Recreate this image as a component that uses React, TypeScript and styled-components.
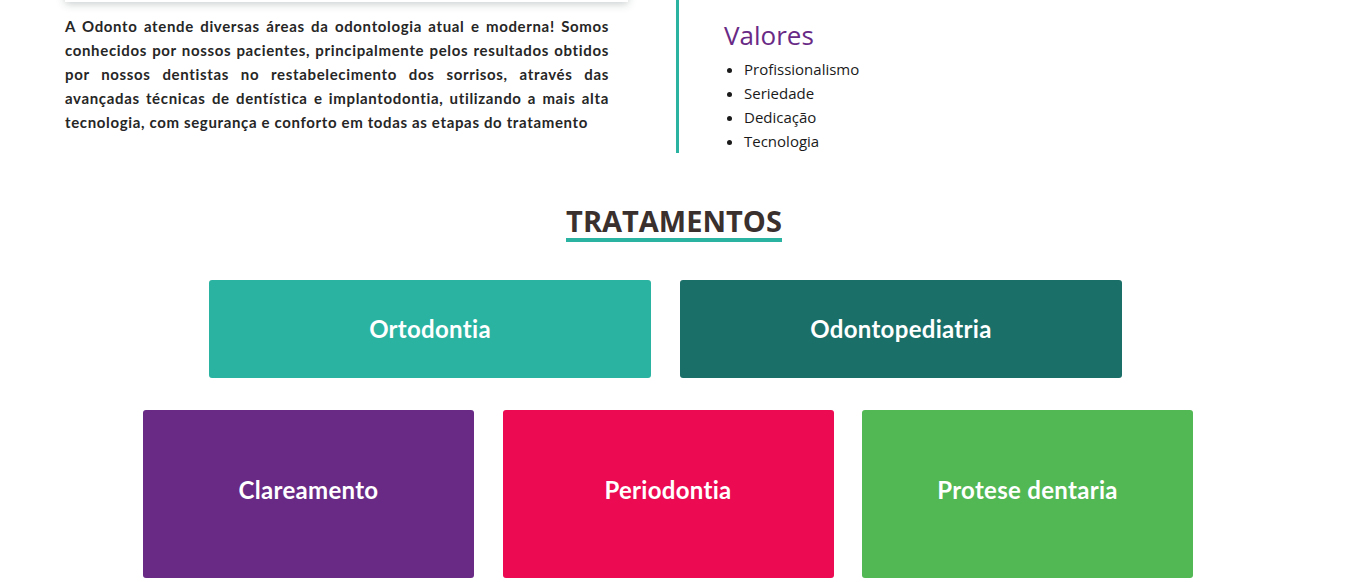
import React from "react";
import styled, { createGlobalStyle } from "styled-components";

const Global = createGlobalStyle`
  html, body { margin: 0; padding: 0; background: #fff; }
  body { font-family: "Lato", "Noto Sans", sans-serif; }
`;

const Page = styled.div`
  width: 1348px;
  overflow: hidden;
`;

const About = styled.section`
  display: flex;
  align-items: flex-start;
  padding-left: 65px;
`;

const LeftCol = styled.div`
  width: 563px;
  display: flex;
  flex-direction: column;
`;

const Picture = styled.div`
  height: 20px;
  margin-top: -18px;
  background: #fff;
  box-shadow: 0 2px 8px rgba(40, 60, 60, 0.25);
`;

const Intro = styled.p`
  margin: 12px 0 0;
  width: 544px;
  font-family: "Lato", sans-serif;
  font-weight: 700;
  font-size: 15px;
  letter-spacing: 0.65px;
  line-height: 24px;
  color: #262626;
  text-align: justify;
`;

const Values = styled.div`
  margin-left: 48px;
  border-left: 3px solid #2bb3a1;
  padding: 17px 0 0 45px;
  height: 136px;
`;

const ValuesTitle = styled.h3`
  margin: 0;
  font-family: "Open Sans", "Noto Sans", sans-serif;
  font-weight: 400;
  font-size: 26px;
  line-height: 36px;
  color: #692a86;
`;

const List = styled.ul`
  margin: 4px 0 0;
  padding-left: 20px;
  font-family: "Open Sans", "Noto Sans", sans-serif;
  font-size: 15px;
  line-height: 24px;
  color: #1a1a1a;
`;

const Heading = styled.h2`
  margin: 51px auto 0;
  width: fit-content;
  font-family: "Open Sans", sans-serif;
  font-weight: 700;
  font-size: 29px;
  line-height: 34px;
  color: #3a302e;
  border-bottom: 4px solid #2bb3a1;
`;

const Row = styled.div<{ $top: number; $left: number; $gap: number }>`
  display: flex;
  gap: ${(p) => p.$gap}px;
  padding-left: ${(p) => p.$left}px;
  margin-top: ${(p) => p.$top}px;
`;

const Card = styled.div<{ $bg: string; $w: number; $h: number; $pb?: number }>`
  box-sizing: border-box;
  width: ${(p) => p.$w}px;
  height: ${(p) => p.$h}px;
  padding-bottom: ${(p) => p.$pb ?? 0}px;
  background: ${(p) => p.$bg};
  border-radius: 3px;
  display: flex;
  align-items: center;
  justify-content: center;
  color: #fff;
  font-family: "Lato", sans-serif;
  font-weight: 700;
  font-size: 24px;
  letter-spacing: 0.3px;
`;

export default function App() {
  return (
    <Page>
      <Global />
      <About>
        <LeftCol>
          <Picture />
          <Intro>
            A Odonto atende diversas áreas da odontologia atual e moderna! Somos conhecidos por nossos
            pacientes, principalmente pelos resultados obtidos por nossos dentistas no restabelecimento dos
            sorrisos, através das avançadas técnicas de dentística e implantodontia, utilizando a mais alta
            tecnologia, com segurança e conforto em todas as etapas do tratamento
          </Intro>
        </LeftCol>
        <Values>
          <ValuesTitle>Valores</ValuesTitle>
          <List>
            <li>Profissionalismo</li>
            <li>Seriedade</li>
            <li>Dedicação</li>
            <li>Tecnologia</li>
          </List>
        </Values>
      </About>
      <Heading>TRATAMENTOS</Heading>
      <Row $top={38} $left={209} $gap={29}>
        <Card $bg="#2bb3a1" $w={442} $h={98} $pb={2}>Ortodontia</Card>
        <Card $bg="#1b6f69" $w={442} $h={98} $pb={2}>Odontopediatria</Card>
      </Row>
      <Row $top={32} $left={143} $gap={28.5}>
        <Card $bg="#692a86" $w={331} $h={168} $pb={10}>Clareamento</Card>
        <Card $bg="#ec0a52" $w={331} $h={168} $pb={10}>Periodontia</Card>
        <Card $bg="#52b853" $w={331} $h={168} $pb={10}>Protese dentaria</Card>
      </Row>
    </Page>
  );
}
